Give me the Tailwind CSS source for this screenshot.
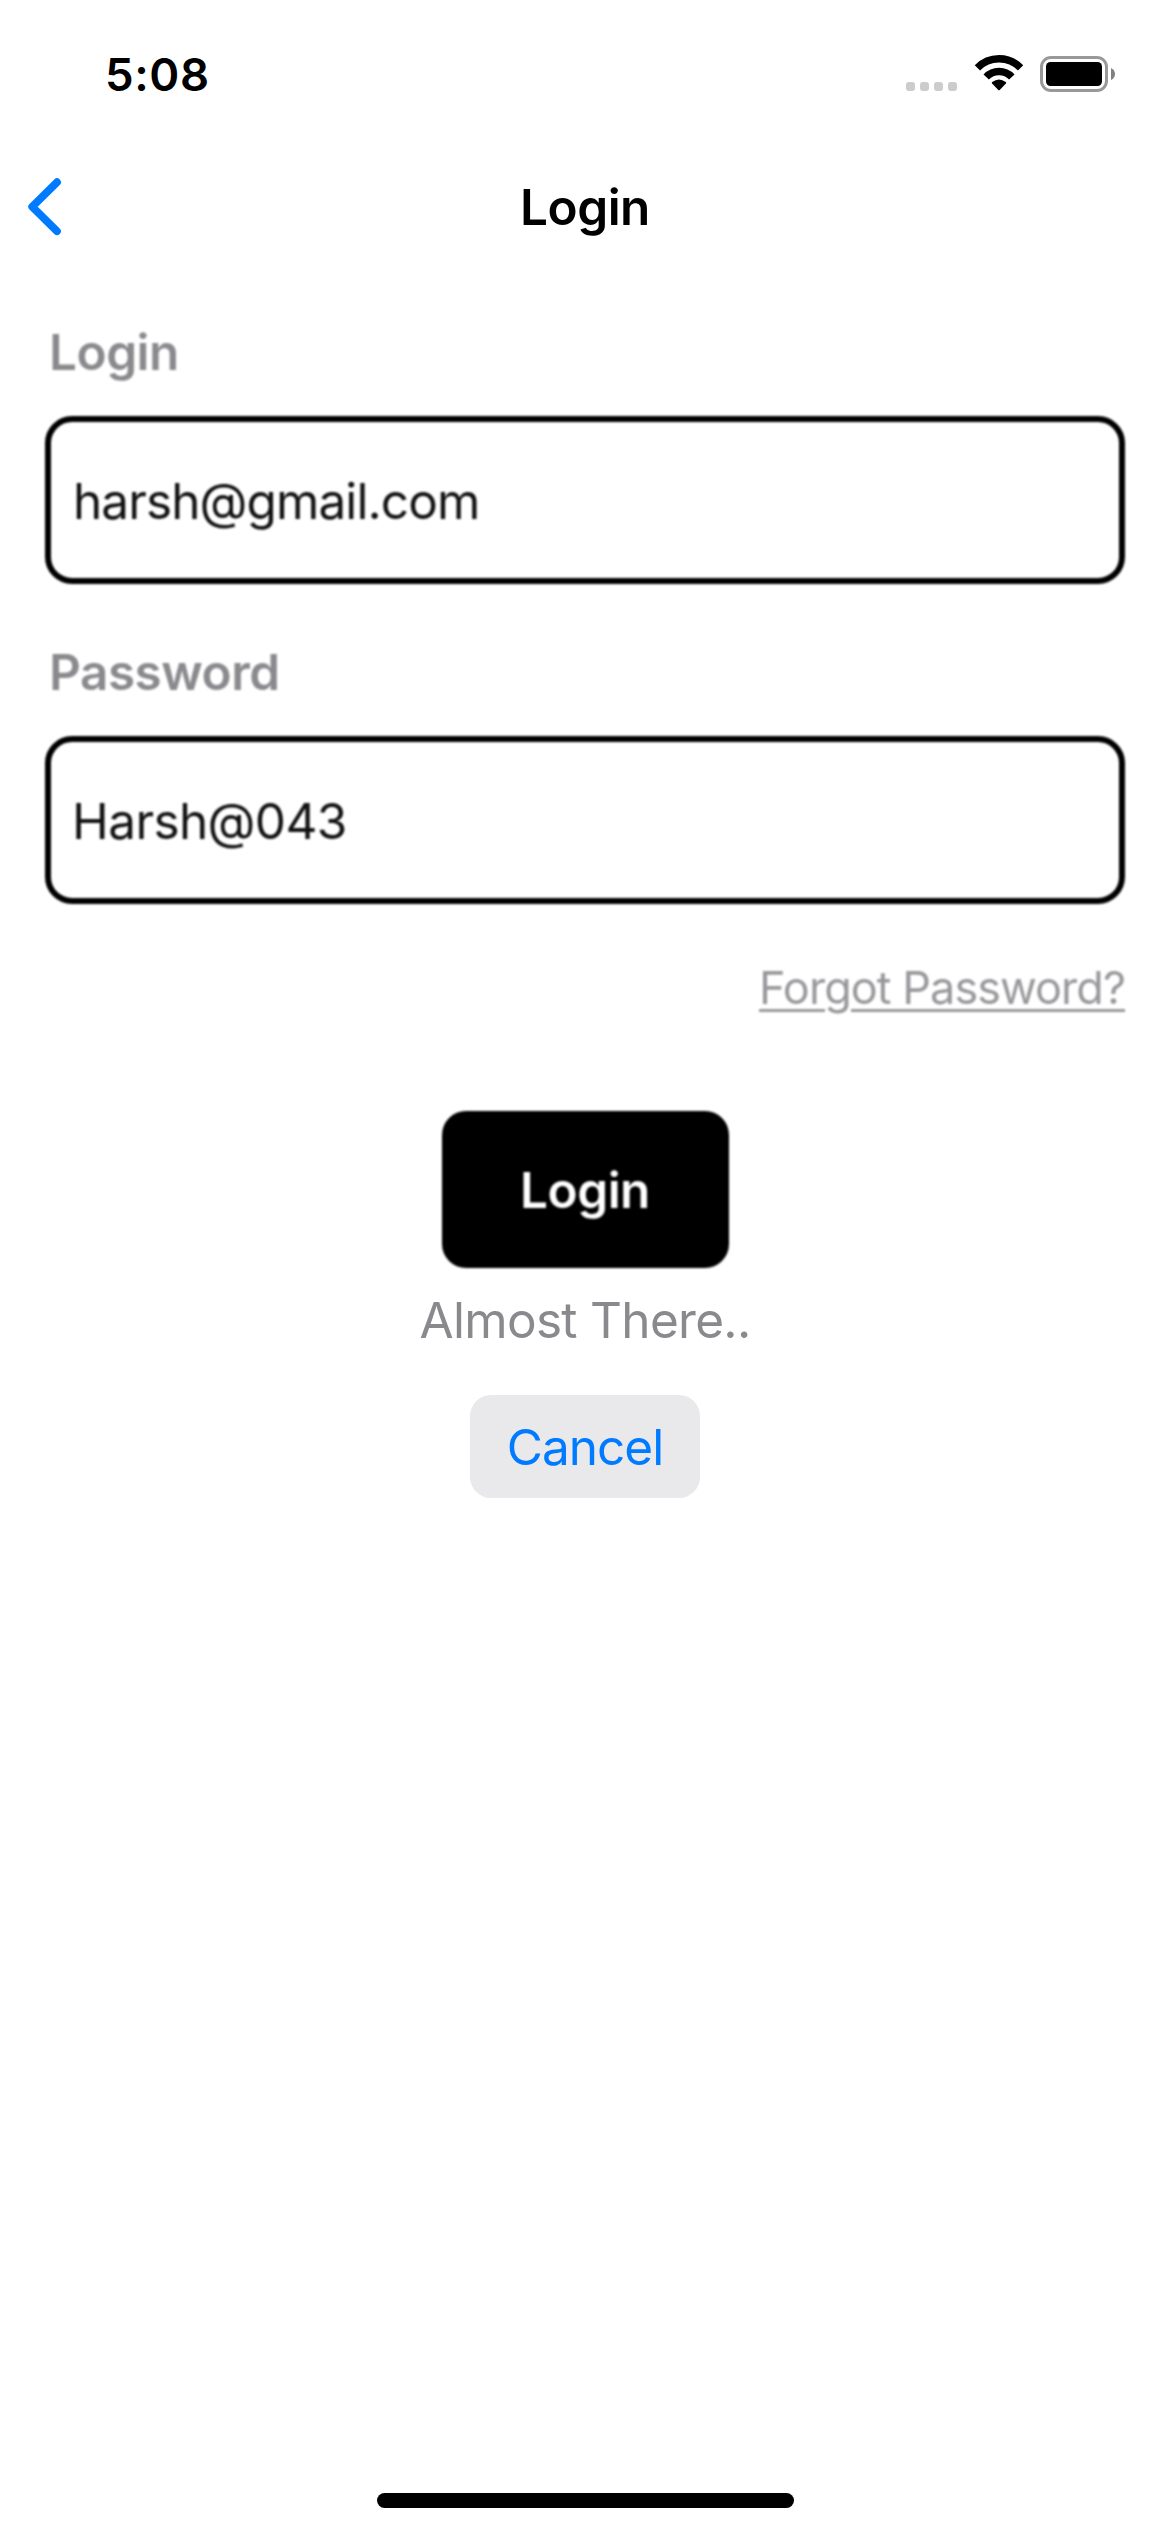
<!DOCTYPE html>
<html lang="en">
<head>
<meta charset="utf-8">
<title>Login</title>
<script src="https://cdn.jsdelivr.net/npm/@tailwindcss/browser@4"></script>
</head>
<body class="bg-white">
<div class="flex h-[2532px] w-[1170px] flex-col overflow-hidden bg-white font-[Inter,sans-serif] text-[49.5px] leading-[60px] text-black">

  <!-- Status bar -->
  <div class="flex h-[141px] items-start justify-between pt-[44px] pr-[55px] pl-[105px]">
    <span class="pt-px text-[45.5px] font-semibold tracking-[0.6px]">5:08</span>
    <div class="flex h-12 items-end">
      <div class="mr-[17px] mb-px flex gap-[5px]">
        <i class="size-[9px] rounded-[3px] bg-[#cccccc]"></i>
        <i class="size-[9px] rounded-[3px] bg-[#cccccc]"></i>
        <i class="size-[9px] rounded-[3px] bg-[#cccccc]"></i>
        <i class="size-[9px] rounded-[3px] bg-[#cccccc]"></i>
      </div>
      <svg class="mr-[15px] h-[38px] w-[50px]" viewBox="974 54 50 38" fill="none" stroke="#000" stroke-width="7.4" stroke-linejoin="round">
        <path d="M977.4 67.8A30.2 30.2 0 0 1 1020.6 67.8"/>
        <path d="M986.2 77A17.6 17.6 0 0 1 1011.8 77"/>
        <path d="M992.8 82.8Q999 78.2 1005.2 82.8L999 89.2Z" fill="#000" stroke-width="2"/>
      </svg>
      <svg class="h-9 w-[76px]" viewBox="0 0 76 36">
        <rect x="2.5" y="1.5" width="65" height="33" rx="9.5" fill="none" stroke="#999" stroke-width="3"/>
        <rect x="7" y="6" width="56" height="24" rx="4.5" fill="#000"/>
        <path d="M72 12Q76 14 76 18T72 24Z" fill="#808080"/>
      </svg>
    </div>
  </div>

  <!-- Navigation bar -->
  <div class="grid h-[132px] grid-cols-3 items-center">
    <svg class="ml-[26px] h-[60px] w-[38px]" viewBox="26 177 38 60" fill="none" stroke="#007aff" stroke-width="7.8" stroke-linecap="round" stroke-linejoin="round"><path d="M57 182.2 32.2 206.8 57 231.2"/></svg>
    <h1 class="text-center font-semibold tracking-[-0.5px]">Login</h1>
  </div>

  <!-- Disabled form -->
  <form class="flex flex-col px-[45px] pt-[49px] blur-[1px]">
    <label class="pl-1 font-semibold tracking-[-0.5px] text-[#8a8a8e]">Login</label>
    <div class="mt-[34px] flex h-[168px] items-center rounded-[27px] border-[6px] border-black pt-0.5 pl-[22px] tracking-[-0.9px] text-[#111]">harsh@gmail.com</div>
    <label class="mt-[58px] pl-1 font-semibold tracking-[-0.5px] text-[#8a8a8e]">Password</label>
    <div class="mt-[34px] flex h-[168px] items-center rounded-[27px] border-[6px] border-black pt-0.5 pl-[21px] tracking-[-0.6px] text-[#111]">Harsh@043</div>
    <a class="mt-[57px] self-end text-[45px] leading-[54px] tracking-[-0.95px] text-[#98989c] underline decoration-[3px] underline-offset-[5px]">Forgot Password?</a>
    <button type="button" class="mt-[96px] h-[157px] w-[287px] self-center rounded-[24px] bg-black font-semibold tracking-[-0.5px] text-white">Login</button>
  </form>

  <!-- Progress overlay -->
  <div class="flex flex-col items-center pt-[22px]">
    <p class="tracking-[-0.7px] text-[#8a8a8e]">Almost There..</p>
    <button type="button" class="mt-[45px] h-[103px] w-[230px] rounded-[21px] bg-[#e9e9eb] tracking-[-1px] text-[#007aff]">Cancel</button>
  </div>

  <!-- Home indicator -->
  <div class="mt-auto mb-6 h-[15px] w-[417px] self-center rounded-full bg-black"></div>
</div>
</body>
</html>
